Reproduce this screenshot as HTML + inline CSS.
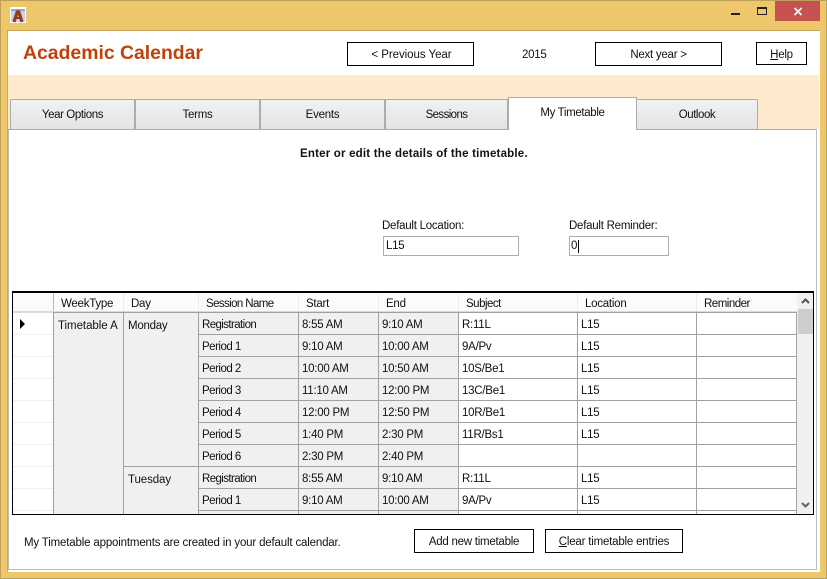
<!DOCTYPE html>
<html><head><meta charset="utf-8"><title>Academic Calendar</title>
<style>
html,body{margin:0;padding:0;background:#fff}
body{position:relative;width:827px;height:579px;overflow:hidden;font-family:"Liberation Sans",sans-serif;font-size:11.5px;color:#111;letter-spacing:-.25px}
div{position:absolute;box-sizing:border-box}
svg{position:absolute;left:0;top:0}
.t{position:absolute;white-space:nowrap;line-height:14px;margin-top:1px}
.r{letter-spacing:-.6px}
.p{letter-spacing:-.5px}
.b{border:1px solid #000;background:#fff;text-align:center;line-height:24px}
.tab{background:linear-gradient(#f1f1f1,#e4e4e4);border:1px solid #acacac;text-align:center;line-height:31px;height:31px;top:99px}
.in{border:1px solid #abadb3;background:#fff;height:20px;top:236px;line-height:19px;padding-left:2px}
u{text-decoration:underline}
</style></head><body>
<div style="left:0;top:0;width:827px;height:579px;background:#eec76a;border:1px solid #bda15a"></div>
<div style="left:7px;top:30px;width:813px;height:542px;background:#fff;border:1px solid #c7a75c;border-right:0;border-bottom:0"></div>
<div style="left:8px;top:75px;width:811px;height:54px;background:#fde9cc"></div>
<div style="left:8px;top:129px;width:809px;height:441px;background:#fff;border:1px solid #bdbdbd;border-top:0"></div>
<div style="left:8px;top:129px;width:809px;height:1px;background:#acacac"></div>

<!-- title bar -->
<svg width="827" height="30" style="z-index:2"><rect x="10" y="7" width="16" height="16" fill="#fff"/><rect x="11" y="9" width="14" height="13" fill="#c3d4ec"/><rect x="11" y="9" width="14" height="2" fill="#8ea9d4"/><path d="M14 22 L17.2 12 H18.8 L22 22" fill="none" stroke="#9a3a1a" stroke-width="3.2"/><rect x="15" y="17" width="6" height="2" fill="#9a3a1a"/><rect x="775" y="1" width="45" height="20" fill="#c75050"/><path d="M794.5 8 L801.5 15 M801.5 8 L794.5 15" stroke="#fff" stroke-width="1.7"/><rect x="731" y="13" width="9" height="2" fill="#222"/><rect x="757.5" y="7.5" width="9" height="7" fill="none" stroke="#222"/><rect x="757" y="7" width="10" height="2" fill="#222"/></svg>

<span class="t" style="left:23px;top:41px;font-size:19.4px;font-weight:bold;color:#c0420a;line-height:22px;letter-spacing:0">Academic Calendar</span>
<div class="b" style="left:347px;top:42px;width:127px;height:24px;letter-spacing:-.05px;padding-left:2px">&lt; Previous Year</div>
<span class="t" style="left:522px;top:47px">2015</span>
<div class="b" style="left:595px;top:42px;width:127px;height:24px">Next year &gt;</div>
<div class="b" style="left:756px;top:42px;width:51px;height:23px"><u>H</u>elp</div>

<!-- tabs -->
<div class="tab" style="left:10px;width:125px;letter-spacing:-.4px">Year Options</div>
<div class="tab" style="left:135px;width:125px">Terms</div>
<div class="tab" style="left:260px;width:125px">Events</div>
<div class="tab" style="left:385px;width:123px;letter-spacing:-.6px">Sessions</div>
<div class="tab" style="left:636px;width:122px;letter-spacing:-.45px">Outlook</div>
<div style="left:508px;top:97px;width:129px;height:33px;background:#fff;border:1px solid #acacac;border-bottom:0;text-align:center;line-height:31px;letter-spacing:-.35px">My Timetable</div>

<span class="t" style="left:300px;top:146px;font-weight:bold;font-size:11.5px;letter-spacing:.2px">Enter or edit the details of the timetable.</span>
<span class="t" style="left:382px;top:218px">Default Location:</span>
<span class="t" style="left:569px;top:218px">Default Reminder:</span>
<div class="in" style="left:383px;width:136px">L15</div>
<div class="in" style="left:569px;width:100px;padding-left:1px">0</div>
<div style="left:578px;top:240px;width:1px;height:13px;background:#000"></div>

<!-- grid -->
<div style="left:12px;top:291px;width:802px;height:224px;border:1px solid #000;border-width:2px 1px 1px 1px;background:#fff"></div>
<div style="left:13px;top:293px;width:784px;height:19px;background:#fbfbfc"></div>
<div style="left:54px;top:313px;width:404px;height:201px;background:#f0f0f0"></div>
<svg width="827" height="579" style="z-index:1">
<g fill="#ebf1fb"><rect x="13" y="334" width="40" height="1"/><rect x="13" y="356" width="40" height="1"/><rect x="13" y="378" width="40" height="1"/><rect x="13" y="400" width="40" height="1"/><rect x="13" y="422" width="40" height="1"/><rect x="13" y="444" width="40" height="1"/><rect x="13" y="466" width="40" height="1"/><rect x="13" y="488" width="40" height="1"/><rect x="13" y="510" width="40" height="1"/></g>
<g fill="#e6edf7"><rect x="123" y="293" width="1" height="19"/><rect x="198" y="293" width="1" height="19"/><rect x="298" y="293" width="1" height="19"/><rect x="378" y="293" width="1" height="19"/><rect x="458" y="293" width="1" height="19"/><rect x="577" y="293" width="1" height="19"/><rect x="696" y="293" width="1" height="19"/></g>
<rect x="53" y="293" width="1" height="19" fill="#b4b8bf"/>
<rect x="13" y="311" width="784" height="1" fill="#d4dbe6"/>
<rect x="13" y="312" width="40" height="1" fill="#d4dbe6"/>
<g fill="#a0a0a0"><rect x="53" y="312" width="744" height="1"/>
<rect x="53" y="313" width="1" height="201"/><rect x="123" y="313" width="1" height="201"/><rect x="198" y="313" width="1" height="201"/><rect x="298" y="313" width="1" height="201"/><rect x="378" y="313" width="1" height="201"/><rect x="458" y="313" width="1" height="201"/><rect x="577" y="313" width="1" height="201"/><rect x="696" y="313" width="1" height="201"/><rect x="796" y="313" width="1" height="201"/>
<rect x="198" y="334" width="599" height="1"/><rect x="198" y="356" width="599" height="1"/><rect x="198" y="378" width="599" height="1"/><rect x="198" y="400" width="599" height="1"/><rect x="198" y="422" width="599" height="1"/><rect x="198" y="444" width="599" height="1"/><rect x="123" y="466" width="674" height="1"/><rect x="198" y="488" width="599" height="1"/><rect x="198" y="510" width="599" height="1"/></g>
<rect x="797" y="293" width="16" height="221" fill="#f0f0f0"/>
<rect x="798" y="309" width="15" height="25" fill="#cdcdcd"/>
<path d="M802 303 L805.5 299.5 L809 303" fill="none" stroke="#505050" stroke-width="2"/>
<path d="M802 503 L805.5 506.5 L809 503" fill="none" stroke="#606060" stroke-width="2"/>
<path d="M20 319 L25 324 L20 329 Z" fill="#000"/>
</svg>
<div style="left:0;top:0;width:827px;height:579px;z-index:3">
<span class="t" style="left:61px;top:296px">WeekType</span><span class="t" style="left:131px;top:296px">Day</span><span class="t r" style="left:206px;top:296px">Session Name</span><span class="t" style="left:306px;top:296px">Start</span><span class="t" style="left:386px;top:296px">End</span><span class="t p" style="left:466px;top:296px">Subject</span><span class="t" style="left:585px;top:296px">Location</span><span class="t p" style="left:704px;top:296px">Reminder</span>
<span class="t" style="left:58px;top:318px;letter-spacing:-.05px">Timetable A</span><span class="t" style="left:128px;top:318px">Monday</span><span class="t" style="left:128px;top:472px;letter-spacing:-.1px">Tuesday</span>

<span class="t r" style="left:202px;top:317px">Registration</span><span class="t" style="left:302px;top:317px">8:55 AM</span><span class="t" style="left:382px;top:317px">9:10 AM</span><span class="t" style="left:462px;top:317px">R:11L</span><span class="t" style="left:581px;top:317px">L15</span>
<span class="t p" style="left:202px;top:339px">Period 1</span><span class="t" style="left:302px;top:339px">9:10 AM</span><span class="t" style="left:382px;top:339px">10:00 AM</span><span class="t" style="left:462px;top:339px">9A/Pv</span><span class="t" style="left:581px;top:339px">L15</span>
<span class="t p" style="left:202px;top:361px">Period 2</span><span class="t" style="left:302px;top:361px">10:00 AM</span><span class="t" style="left:382px;top:361px">10:50 AM</span><span class="t" style="left:462px;top:361px">10S/Be1</span><span class="t" style="left:581px;top:361px">L15</span>
<span class="t p" style="left:202px;top:383px">Period 3</span><span class="t" style="left:302px;top:383px">11:10 AM</span><span class="t" style="left:382px;top:383px">12:00 PM</span><span class="t" style="left:462px;top:383px">13C/Be1</span><span class="t" style="left:581px;top:383px">L15</span>
<span class="t p" style="left:202px;top:405px">Period 4</span><span class="t" style="left:302px;top:405px">12:00 PM</span><span class="t" style="left:382px;top:405px">12:50 PM</span><span class="t" style="left:462px;top:405px">10R/Be1</span><span class="t" style="left:581px;top:405px">L15</span>
<span class="t p" style="left:202px;top:427px">Period 5</span><span class="t" style="left:302px;top:427px">1:40 PM</span><span class="t" style="left:382px;top:427px">2:30 PM</span><span class="t" style="left:462px;top:427px">11R/Bs1</span><span class="t" style="left:581px;top:427px">L15</span>
<span class="t p" style="left:202px;top:449px">Period 6</span><span class="t" style="left:302px;top:449px">2:30 PM</span><span class="t" style="left:382px;top:449px">2:40 PM</span>
<span class="t r" style="left:202px;top:471px">Registration</span><span class="t" style="left:302px;top:471px">8:55 AM</span><span class="t" style="left:382px;top:471px">9:10 AM</span><span class="t" style="left:462px;top:471px">R:11L</span><span class="t" style="left:581px;top:471px">L15</span>
<span class="t p" style="left:202px;top:493px">Period 1</span><span class="t" style="left:302px;top:493px">9:10 AM</span><span class="t" style="left:382px;top:493px">10:00 AM</span><span class="t" style="left:462px;top:493px">9A/Pv</span><span class="t" style="left:581px;top:493px">L15</span>
</div>

<span class="t" style="left:24px;top:535px;letter-spacing:-.17px">My Timetable appointments are created in your default calendar.</span>
<div class="b" style="left:414px;top:529px;width:120px;height:24px">Add new timetable</div>
<div class="b" style="left:545px;top:529px;width:138px;height:24px;letter-spacing:-.2px"><u>C</u>lear timetable entries</div>
</body></html>
